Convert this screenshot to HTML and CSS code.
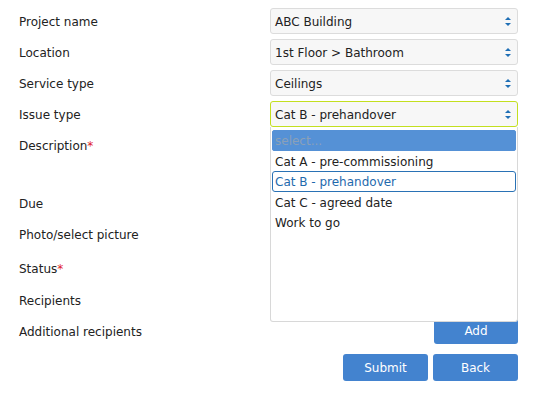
FILE: index.html
```html
<!DOCTYPE html>
<html>
<head>
<meta charset="utf-8">
<link rel="stylesheet" href="styles.css">
</head>
<body>
<form class="form">
  <div class="row"><label class="lbl">Project name</label><div class="sel"><span>ABC Building</span><i class="arr"></i></div></div>
  <div class="row"><label class="lbl">Location</label><div class="sel"><span>1st Floor &gt; Bathroom</span><i class="arr"></i></div></div>
  <div class="row"><label class="lbl">Service type</label><div class="sel"><span>Ceilings</span><i class="arr"></i></div></div>
  <div class="row issue"><label class="lbl">Issue type</label>
    <div class="ctl">
      <div class="sel focus"><span>Cat B - prehandover</span><i class="arr"></i></div>
      <ul class="menu">
        <li class="opt hl">select...</li>
        <li class="opt">Cat A - pre-commissioning</li>
        <li class="opt cur">Cat B - prehandover</li>
        <li class="opt">Cat C - agreed date</li>
        <li class="opt">Work to go</li>
      </ul>
    </div>
  </div>
  <div class="row desc"><label class="lbl">Description<span class="req">*</span></label><div class="area"></div></div>
  <div class="row"><label class="lbl">Due</label><div class="inp"></div></div>
  <div class="row photo"><label class="lbl">Photo/select picture</label><div></div></div>
  <div class="row status"><label class="lbl">Status<span class="req">*</span></label><div class="sel"></div></div>
  <div class="row"><label class="lbl">Recipients</label><div class="inp"></div></div>
  <div class="row"><label class="lbl">Additional recipients</label><div class="addwrap"><button type="button" class="btn add">Add</button></div></div>
  <div class="actions"><button type="button" class="btn">Submit</button><button type="button" class="btn">Back</button></div>
</form>
</body>
</html>
```
FILE: styles.css
```css
* { box-sizing: border-box; }
body {
  margin: 0;
  font-family: "DejaVu Sans", Verdana, sans-serif;
  font-size: 12px;
  color: #222;
  background: #fff;
}
.form {
  padding: 8px 0 0 19px;
  width: 518px;
}
.row {
  display: grid;
  grid-template-columns: 251px 248px;
  min-height: 26px;
  margin-bottom: 5px;
}
.lbl {
  height: 26px;
  line-height: 24px;
  padding-top: 2px;
  white-space: nowrap;
}
.req { color: #e0202a; }
.ctl { position: relative; }
.sel {
  position: relative;
  height: 26px;
  border: 1px solid #dcdcdc;
  border-radius: 3px;
  background: #f7f7f7;
  padding: 1px 0 0 4px;
  line-height: 24px;
  white-space: nowrap;
}
.sel.focus { border-color: #c3df1f; }
.arr {
  position: absolute;
  right: 6px;
  top: 50%;
  width: 6px;
  height: 9px;
  margin-top: -4px;
}
.arr::before, .arr::after {
  content: "";
  position: absolute;
  left: 0;
  border-left: 3px solid transparent;
  border-right: 3px solid transparent;
}
.arr::before { top: 0; border-bottom: 3px solid #1f6fb5; }
.arr::after { bottom: 0; border-top: 3px solid #1f6fb5; }
.menu {
  position: absolute;
  z-index: 5;
  left: 0;
  top: 26px;
  width: 248px;
  height: 195px;
  margin: 0;
  padding: 3px 0 0 0;
  list-style: none;
  background: #fff;
  border: 1px solid #d8d8d8;
  border-top: none;
  border-radius: 0 0 3px 3px;
}
.opt {
  height: 20.6px;
  line-height: 20px;
  padding-left: 2px;
  margin: 0 1px;
  border: 1px solid transparent;
  border-radius: 3px;
  white-space: nowrap;
}
.opt.hl { background: #5591d6; color: #8aa0b8; border-color: #5591d6; border-radius: 2px; }
.opt.cur { border-color: #2a72b5; color: #1f6aad; }
.desc { min-height: 53px; }
.area { height: 53px; border: 1px solid #dcdcdc; border-radius: 3px; }
.inp { height: 26px; border: 1px solid #dcdcdc; border-radius: 3px; }
.photo { min-height: 29px; }
.status { min-height: 27px; }
.addwrap { display: flex; justify-content: flex-end; }
.btn {
  width: 85px;
  height: 26px;
  border: none;
  border-radius: 3px;
  background: #4383cf;
  color: #fff;
  font-family: "DejaVu Sans", Verdana, sans-serif;
  font-size: 12px;
  padding: 0;
}
.add { width: 84px; }
.actions {
  display: flex;
  justify-content: flex-end;
  gap: 5px;
  width: 499px;
  margin-top: 10px;
}
.actions .btn { height: 27px; }
```
